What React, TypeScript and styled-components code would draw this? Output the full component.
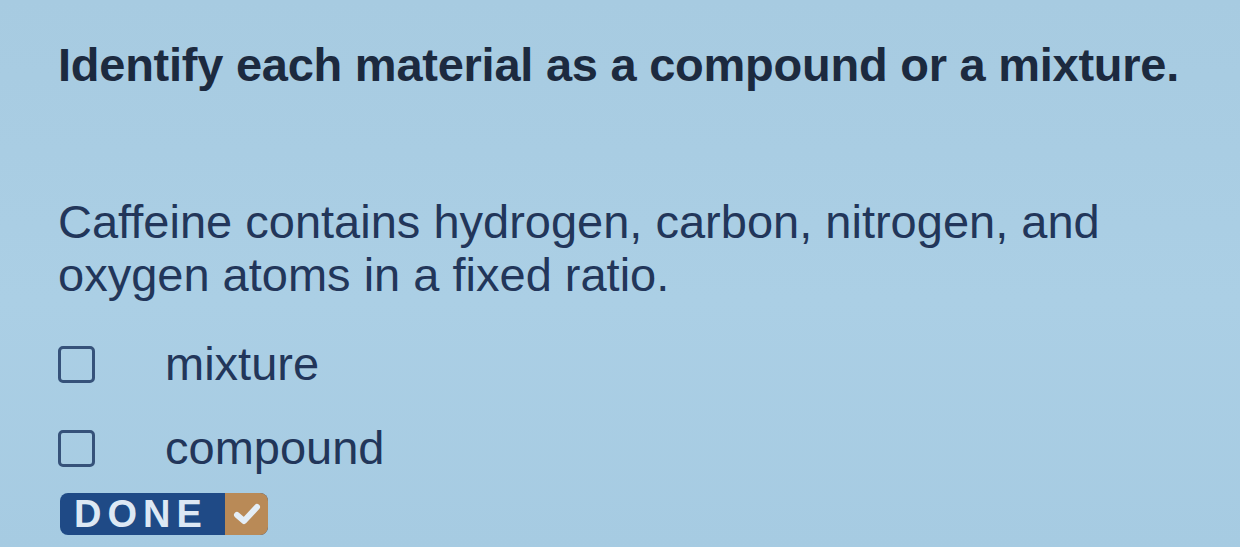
import * as React from 'react';
import styled, { createGlobalStyle } from 'styled-components';

const GlobalStyle = createGlobalStyle`
  html, body {
    margin: 0;
    padding: 0;
    background: #a9cde3;
  }
  body {
    font-family: "Liberation Sans", Arial, sans-serif;
    color: #1f2e45;
  }
`;

const Page = styled.div`
  width: 1240px;
  height: 547px;
  box-sizing: border-box;
  padding: 36px 0 0 58px;
  background: linear-gradient(180deg, #a7cbe1 0%, #abcfe5 55%, #a6cbe2 100%);
  overflow: hidden;
`;

const Title = styled.h1`
  margin: 0;
  font-size: 47px;
  line-height: 58px;
  font-weight: 700;
  color: #1c2a3f;
  letter-spacing: -0.25px;
  white-space: nowrap;
`;

const Prompt = styled.p`
  margin: 101px 0 0 0;
  width: 1100px;
  font-size: 47px;
  line-height: 53px;
  color: #22365a;
`;

const Options = styled.div`
  display: flex;
  flex-direction: column;
  gap: 46px;
  margin-top: 44px;
`;

const Option = styled.label`
  display: flex;
  align-items: center;
  gap: 70px;
  height: 38px;
  font-size: 47px;
  line-height: 38px;
  color: #22365a;
`;

const Box = styled.span`
  width: 31px;
  height: 31px;
  border: 3px solid #36527a;
  border-radius: 5px;
  flex-shrink: 0;
`;

const DoneButton = styled.button`
  display: flex;
  align-items: stretch;
  margin: 26px 0 0 2px;
  padding: 0;
  border: 0;
  border-radius: 8px;
  overflow: hidden;
  height: 42px;
  background: #1f4a86;
  cursor: pointer;
`;

const DoneText = styled.span`
  display: flex;
  align-items: center;
  width: 165px;
  box-sizing: border-box;
  padding: 0 0 0 14px;
  font-family: "Liberation Sans", Arial, sans-serif;
  font-size: 38px;
  font-weight: 700;
  letter-spacing: 6px;
  color: #dde8f4;
`;

const CheckPart = styled.span`
  display: flex;
  align-items: center;
  justify-content: center;
  width: 43px;
  background: #b98a57;
`;

const App: React.FC = () => {
  return (
    <>
      <GlobalStyle />
      <Page>
        <Title>Identify each material as a compound or a mixture.</Title>
        <Prompt>
          Caffeine contains hydrogen, carbon, nitrogen, and oxygen atoms in a fixed ratio.
        </Prompt>
        <Options>
          <Option>
            <Box />
            mixture
          </Option>
          <Option>
            <Box />
            compound
          </Option>
        </Options>
        <DoneButton>
          <DoneText>DONE</DoneText>
          <CheckPart>
            <svg width="28" height="24" viewBox="0 0 28 24">
              <path d="M4 13 L11 19 L24 5" fill="none" stroke="#e4eef7" strokeWidth="6" strokeLinecap="round" strokeLinejoin="round" />
            </svg>
          </CheckPart>
        </DoneButton>
      </Page>
    </>
  );
};

export default App;
